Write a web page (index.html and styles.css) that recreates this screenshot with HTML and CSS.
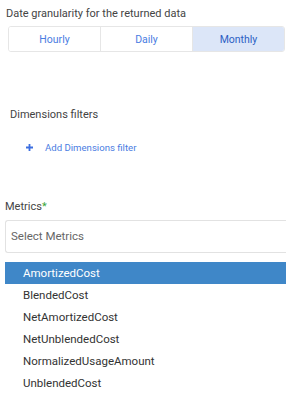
FILE: index.html
```html
<!DOCTYPE html>
<html lang="en">
<head>
    <meta charset="UTF-8">
    <title>Cost query</title>
    <link rel="stylesheet" href="styles.css">
</head>
<body>
  <div class="panel">
    <div class="field granularity">
      <label class="field-label">Date granularity for the returned data</label>
      <div class="segmented">
        <button class="segment">Hourly</button>
        <button class="segment">Daily</button>
        <button class="segment active">Monthly</button>
      </div>
    </div>

    <div class="field filters">
      <label class="field-label">Dimensions filters</label>
      <a class="add-filter" href="#">
        <svg class="plus" width="7" height="7" viewBox="0 0 7 7"><path d="M3.5 0v7M0 3.5h7" stroke="#3d6fe0" stroke-width="1.8"/></svg>
        Add Dimensions filter
      </a>
    </div>

    <div class="field metrics">
      <label class="field-label">Metrics<span class="req">*</span></label>
      <div class="select-box">Select Metrics</div>
      <ul class="options">
        <li class="selected">AmortizedCost</li>
        <li>BlendedCost</li>
        <li>NetAmortizedCost</li>
        <li>NetUnblendedCost</li>
        <li>NormalizedUsageAmount</li>
        <li>UnblendedCost</li>
      </ul>
    </div>
  </div>
</body>
</html>
```

FILE: styles.css
```css
body {
    margin: 0;
    font-family: Roboto, "Noto Sans", Arial, sans-serif;
    color: #333;
    background: #fff;
    width: 286px;
    overflow: hidden;
}

.field-label {
    display: block;
    font-size: 11px;
    line-height: 13px;
    color: #444;
}

.granularity {
    padding: 7px 0 0 6px;
}

.segmented {
    display: flex;
    margin: 6px 1px 0 2px;
    border: 1px solid #e6e6e6;
    border-radius: 3px;
    overflow: hidden;
}

.segment {
    flex: 1;
    height: 24px;
    border: none;
    border-left: 1px solid #e6e6e6;
    background: #fff;
    color: #4a7de2;
    font-family: inherit;
    font-size: 10.5px;
    padding: 0;
}

.segment:first-child {
    border-left: none;
}

.segment.active {
    background: #dce6f8;
    color: #2d5fc4;
}

.filters {
    padding: 56px 0 0 10px;
}

.add-filter {
    display: flex;
    align-items: center;
    gap: 12px;
    height: 11px;
    margin: 21px 0 0 16px;
    color: #4a7de2;
    font-size: 9.6px;
    text-decoration: none;
}

.metrics {
    padding: 47px 0 0 5px;
}

.req {
    color: #3aa63a;
}

.select-box {
    margin-top: 7px;
    height: 31px;
    line-height: 31px;
    border: 1px solid #e2e2e2;
    border-right: none;
    border-radius: 3px 0 0 3px;
    padding-left: 5px;
    font-size: 11.5px;
    color: #666;
}

.options {
    list-style: none;
    margin: 9px 0 0;
    padding: 0;
}

.options li {
    height: 22px;
    line-height: 22px;
    padding-left: 18px;
    font-size: 11.5px;
    color: #333;
}

.options li.selected {
    background: #3f87c8;
    color: #fff;
}
```
